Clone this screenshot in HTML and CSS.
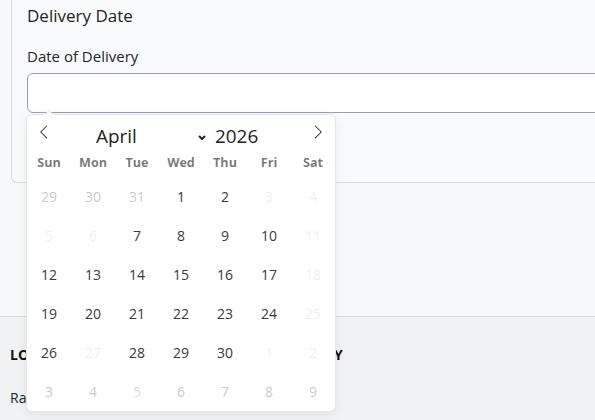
FILE: index.html
```html
<!DOCTYPE html>
<html>
    <head>
        <title>Delivery Date</title>
        <link rel="stylesheet" href="styles.css">
    </head>
    <body>
        <div class="page">
            <section class="top">
                <div class="card">
                    <h2 class="card-title">Delivery Date</h2>
                    <label class="field-label" for="delivery">Date of Delivery</label>
                    <div class="picker">
                        <input id="delivery" class="date-input" type="text">
                        <!-- date picker popup, open under the input -->
                        <div class="calendar">
                            <div class="cal-head">
                                <span class="cal-nav">
                                    <svg viewBox="0 0 17 17"><path d="M5.207 8.471l7.146 7.147-0.707 0.707-7.853-7.854 7.854-7.853 0.707 0.707-7.147 7.146z"/></svg>
                                </span>
                                <div class="cal-current">
                                    <span class="cal-month">April
                                        <svg class="chevron" viewBox="0 0 8 5"><path d="M1 1l3 3 3-3"/></svg>
                                    </span>
                                    <span class="cal-year">2026</span>
                                </div>
                                <span class="cal-nav">
                                    <svg viewBox="0 0 17 17"><path d="M13.207 8.472l-7.854 7.854-0.707-0.707 7.146-7.146-7.146-7.148 0.707-0.707 7.854 7.854z"/></svg>
                                </span>
                            </div>
                            <div class="cal-weekdays">
                                <span>Sun</span><span>Mon</span><span>Tue</span><span>Wed</span><span>Thu</span><span>Fri</span><span>Sat</span>
                            </div>
                            <div class="cal-days">
                                <span class="day other">29</span>
                                <span class="day other">30</span>
                                <span class="day other">31</span>
                                <span class="day">1</span>
                                <span class="day">2</span>
                                <span class="day off">3</span>
                                <span class="day off">4</span>

                                <span class="day off">5</span>
                                <span class="day off">6</span>
                                <span class="day">7</span>
                                <span class="day">8</span>
                                <span class="day">9</span>
                                <span class="day">10</span>
                                <span class="day off">11</span>

                                <span class="day">12</span>
                                <span class="day">13</span>
                                <span class="day">14</span>
                                <span class="day">15</span>
                                <span class="day">16</span>
                                <span class="day">17</span>
                                <span class="day off">18</span>

                                <span class="day">19</span>
                                <span class="day">20</span>
                                <span class="day">21</span>
                                <span class="day">22</span>
                                <span class="day">23</span>
                                <span class="day">24</span>
                                <span class="day off">25</span>

                                <span class="day">26</span>
                                <span class="day off">27</span>
                                <span class="day">28</span>
                                <span class="day">29</span>
                                <span class="day">30</span>
                                <span class="day off">1</span>
                                <span class="day off">2</span>

                                <span class="day other">3</span>
                                <span class="day other">4</span>
                                <span class="day other dim">5</span>
                                <span class="day other">6</span>
                                <span class="day other">7</span>
                                <span class="day other">8</span>
                                <span class="day other">9</span>
                            </div>
                        </div>
                    </div>
                </div>
            </section>
            <section class="bottom">
                <h3 class="section-title">LOCATION AND PREFERRED TIMES FOR DELIVERY</h3>
                <p class="section-text">Radius of delivery from the store</p>
            </section>
        </div>
    </body>
</html>
```

FILE: styles.css
```css
body {
    margin: 0;
    font-family: "Open Sans", "Noto Sans", sans-serif;
    color: #212529;
    background-color: #f1f2f4;
}
.page {
    width: 595px;
    height: 420px;
    overflow: hidden;
}
.top {
    background-color: #f8f9fa;
    border-bottom: 1px solid #d3d7de;
    padding: 0 0 133px 11px;
}
.card {
    width: 700px;
    padding: 4px 15px 69px;
    border: 1px solid #d3d7de;
    border-top: 0;
    border-radius: 0 0 6px 6px;
    background-color: #f9fafb;
}
.card-title {
    margin: 0 0 18px;
    font-size: 17px;
    font-weight: 400;
    line-height: 24px;
    color: #1d1f23;
}
.field-label {
    display: block;
    margin-bottom: 6px;
    font-size: 15px;
    line-height: 21px;
    color: #212529;
}
.picker {
    position: relative;
}
.date-input {
    display: block;
    box-sizing: border-box;
    width: 100%;
    height: 40px;
    margin: 0;
    padding: 0 12px;
    border: 1px solid #91a1b6;
    border-radius: 6px;
    background-color: #fff;
    font: inherit;
}

/* calendar popup */
.calendar {
    position: absolute;
    top: 42px;
    left: 0;
    z-index: 5;
    width: 308px;
    background-color: #fff;
    border-radius: 5px;
    box-shadow: 1px 0 0 #e6e6e6, -1px 0 0 #e6e6e6, 0 1px 0 #e6e6e6, 0 -1px 0 #e6e6e6, 0 3px 13px rgba(0, 0, 0, 0.08);
}
.calendar::before,
.calendar::after {
    content: "";
    position: absolute;
    bottom: 100%;
    left: 22px;
    width: 0;
    height: 0;
    border: solid transparent;
}
.calendar::before {
    margin-left: -5px;
    border-width: 5px;
    border-bottom-color: #e6e6e6;
}
.calendar::after {
    margin-left: -4px;
    border-width: 4px;
    border-bottom-color: #fff;
}
.cal-head {
    display: flex;
    height: 34px;
}
.cal-nav {
    padding: 10px;
}
.cal-nav svg {
    display: block;
    width: 14px;
    height: 14px;
    fill: #1f1f1f;
}
.cal-current {
    flex: 1;
    display: flex;
    align-items: center;
    height: 25px;
    padding: 9px 0 0 30px;
    font-size: 18.9px;
    line-height: 25px;
    color: #222;
}
.cal-month {
    display: flex;
    align-items: center;
    justify-content: space-between;
    box-sizing: border-box;
    width: 119px;
    padding: 0 4px 0 5px;
}
.chevron {
    width: 8px;
    height: 5px;
    margin-top: 1px;
    fill: none;
    stroke: #222;
    stroke-width: 2;
}
.cal-year {
    padding-left: 5px;
}
.cal-weekdays {
    display: grid;
    grid-template-columns: repeat(7, 44px);
    align-items: center;
    height: 27px;
    text-align: center;
    font-size: 12.6px;
    font-weight: 700;
    color: rgba(0, 0, 0, 0.54);
}
.cal-days {
    display: grid;
    grid-template-columns: repeat(7, 44px);
    padding-top: 1px;
}
.day {
    height: 39px;
    line-height: 39px;
    text-align: center;
    font-size: 14px;
    color: #393939;
}
.day.other {
    color: rgba(57, 57, 57, 0.3);
}
.day.dim {
    color: rgba(57, 57, 57, 0.2);
}
.day.off {
    color: rgba(57, 57, 57, 0.1);
}

/* section under the card */
.bottom {
    padding: 28px 10px;
}
.section-title {
    margin: 0 0 24px;
    font-size: 14px;
    font-weight: 700;
    line-height: 19px;
    word-spacing: -0.6px;
    color: #111;
}
.section-text {
    margin: 0;
    font-size: 14px;
    line-height: 19px;
    color: #212529;
}
```
